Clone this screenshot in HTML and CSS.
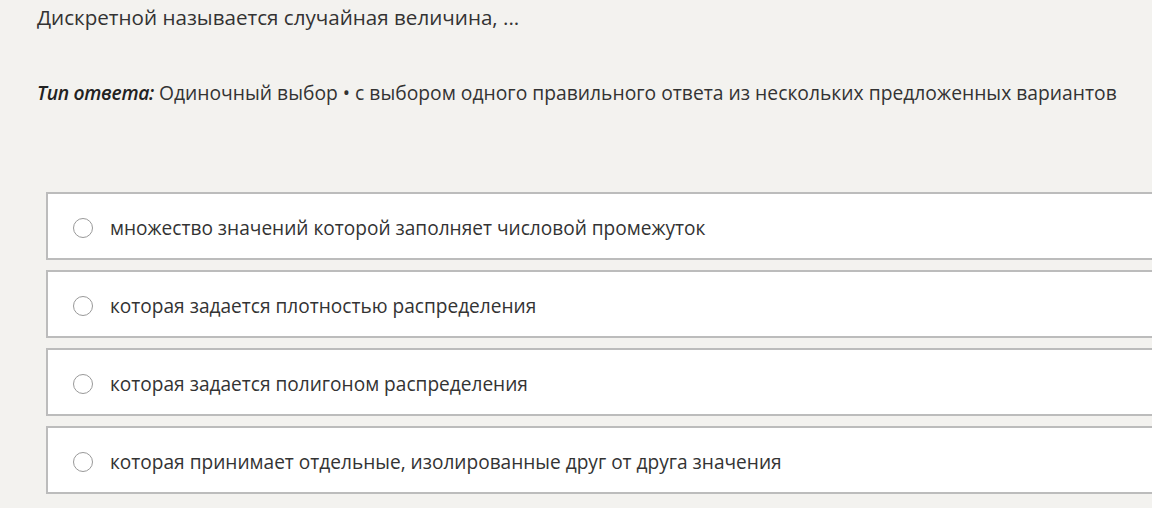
FILE: index.html
```html
<!DOCTYPE html>
<html lang="ru">
<head>
<meta charset="utf-8">
<link rel="stylesheet" href="styles.css">
</head>
<body>
<div class="page">
  <p class="question">Дискретной называется случайная величина, ...</p>
  <p class="type"><span class="type-label">Тип ответа:</span> Одиночный выбор • с выбором одного правильного ответа из нескольких предложенных вариантов</p>
  <div class="options">
    <label class="option"><span class="radio"></span><span class="text">множество значений которой заполняет числовой промежуток</span></label>
    <label class="option"><span class="radio"></span><span class="text">которая задается плотностью распределения</span></label>
    <label class="option"><span class="radio"></span><span class="text">которая задается полигоном распределения</span></label>
    <label class="option"><span class="radio"></span><span class="text">которая принимает отдельные, изолированные друг от друга значения</span></label>
  </div>
</div>
</body>
</html>
```

FILE: styles.css
```css
html, body {
  margin: 0;
  padding: 0;
  background: #f3f2ef;
  overflow: hidden;
}
.page {
  font-family: "Open Sans", "Noto Sans", sans-serif;
  color: #333;
  font-size: 19.3px;
  padding: 1px 0 0 37px;
  width: 1300px;
}
.question {
  margin: 0;
  line-height: 32px;
  font-size: 20.6px;
}
.type {
  margin: 44px 0 0 0;
  line-height: 32px;
}
.type-label {
  font-style: italic;
  font-weight: 600;
  color: #222;
  letter-spacing: -0.3px;
}
.options {
  margin: 83px 0 0 9px;
  display: flex;
  flex-direction: column;
  gap: 10px;
}
.option {
  display: flex;
  align-items: center;
  box-sizing: border-box;
  height: 68px;
  background: #fff;
  border: 2px solid #bcbcbc;
  border-right: none;
  padding: 3px 0 0 25px;
}
.radio {
  width: 20px;
  height: 20px;
  border: 1.5px solid #999;
  border-radius: 50%;
  box-sizing: border-box;
  flex: none;
  margin-right: 17px;
}
.text {
  line-height: 24px;
  font-size: 19.1px;
}
```
